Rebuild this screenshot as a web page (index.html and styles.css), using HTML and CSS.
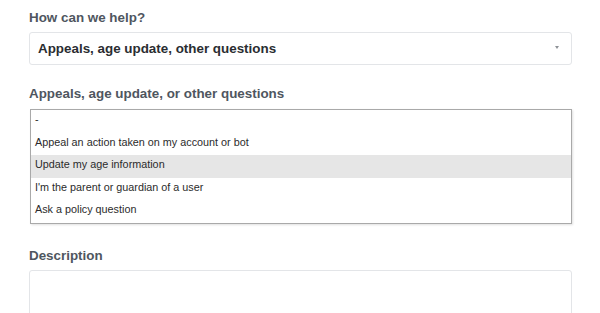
FILE: index.html
```html
<!DOCTYPE html>
<html lang="en">
    <head>
        <meta charset="UTF-8" />
        <title>Submit a request</title>
        <link rel="stylesheet" href="styles.css">
    </head>
    <body>
        <form class="request-form">
            <div class="field">
                <label class="field-label">How can we help?</label>
                <div class="select">
                    <span class="select-value">Appeals, age update, other questions</span>
                    <span class="caret"></span>
                </div>
            </div>
            <div class="field field-open">
                <label class="field-label">Appeals, age update, or other questions</label>
                <ul class="options">
                    <li class="option">-</li>
                    <li class="option">Appeal an action taken on my account or bot</li>
                    <li class="option active">Update my age information</li>
                    <li class="option">I'm the parent or guardian of a user</li>
                    <li class="option">Ask a policy question</li>
                </ul>
            </div>
            <div class="field">
                <label class="field-label">Description</label>
                <div class="textarea"></div>
            </div>
        </form>
    </body>
</html>
```

FILE: styles.css
```css
:root {
    --label: #4f5660;
    --text-main: #2a2d31;
    --border: #e3e5e8;
}
html,
body {
    margin: 0;
    background: #fff;
    font-family: "Liberation Sans", Arial, sans-serif;
    color: var(--text-main);
}
.request-form {
    padding: 9px 28px 0 29px;
    display: flex;
    flex-direction: column;
}
.field {
    display: flex;
    flex-direction: column;
}
.field-label {
    font-size: 13.4px;
    font-weight: 700;
    color: var(--label);
    line-height: 18px;
    margin-bottom: 5px;
}
.select {
    height: 31px;
    border: 1px solid var(--border);
    border-radius: 3px;
    display: flex;
    align-items: center;
    justify-content: space-between;
    padding: 0 12px 0 8px;
}
.select-value {
    font-size: 13.4px;
    font-weight: 700;
    color: var(--text-main);
}
.caret {
    width: 0;
    height: 0;
    border-left: 2.5px solid transparent;
    border-right: 2.5px solid transparent;
    border-top: 3px solid #8e9297;
    margin-top: -2px;
}
.field-open {
    margin-top: 20px;
}
.options {
    list-style: none;
    margin: 1px 0 0 1px;
    padding: 0;
    border: 1px solid #a9a9a9;
    box-shadow: 1px 1px 2px rgba(0, 0, 0, 0.12);
    background: #fff;
}
.option {
    height: 22.6px;
    line-height: 19px;
    font-size: 10.8px;
    padding: 0 4px;
    color: #2b2b2b;
}
.option.active {
    background: #e6e6e6;
}
.field-open + .field {
    margin-top: 23px;
}
.textarea {
    height: 80px;
    border: 1px solid var(--border);
    border-radius: 3px;
}
```
